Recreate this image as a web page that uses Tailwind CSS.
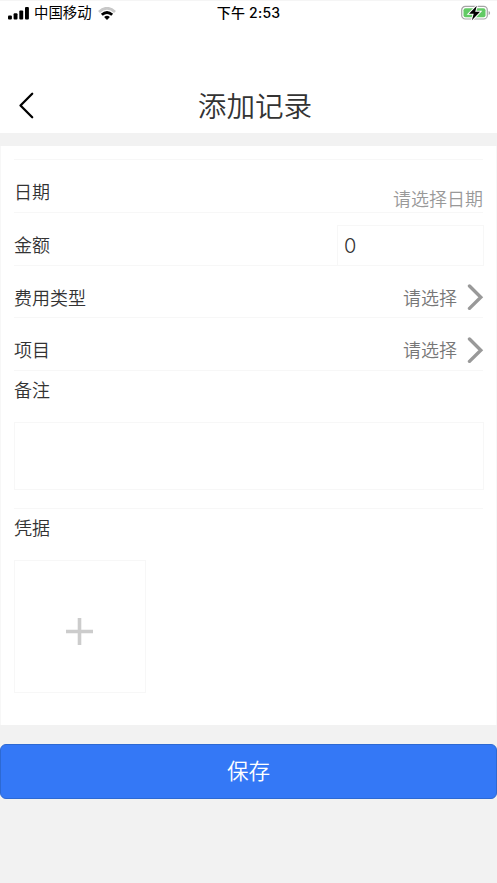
<!DOCTYPE html>
<html lang="zh-CN">
<head>
<meta charset="utf-8">
<meta name="viewport" content="width=device-width, initial-scale=1">
<title>添加记录</title>
<script src="https://cdn.jsdelivr.net/npm/@tailwindcss/browser@4"></script>
</head>
<body class="bg-[#f2f2f2] font-['Inter','Noto_Sans_CJK_SC',sans-serif] font-[350] text-[#333] h-[883px] overflow-hidden">
<header class="bg-white h-[133px] border-t border-[#f5f5f5]">
  <div class="grid grid-cols-3 items-center h-6 pl-2 pr-[6px] text-black font-normal">
    <div class="flex items-center">
      <svg class="w-[21px] h-[13px]" viewBox="0 0 21 13"><rect y="8.5" width="3.9" height="4" rx="1"/><rect x="5.6" y="6.3" width="3.9" height="6.2" rx="1"/><rect x="11.3" y="3.6" width="3.9" height="8.9" rx="1"/><rect x="17" y="0" width="3.9" height="12.5" rx="1"/></svg>
      <span class="ml-[5px] text-[14.4px] leading-6">中国移动</span>
      <svg class="ml-[6px] w-[18px] h-[13px]" viewBox="0 0 18 13" fill="none" stroke-width="2.8"><path d="M1 5Q9-2.4 17 5" stroke="#c8c8c8"/><path d="M3.8 7.8Q9 3.1 14.2 7.8" stroke="#000"/><path d="M6.1 10Q9 7.4 11.9 10L9 12.9Z" fill="#000"/></svg>
    </div>
    <div class="-ml-[2px] text-center text-[14px] font-medium leading-6 whitespace-nowrap tracking-[.2px]">下午 2:53</div>
    <svg class="justify-self-end w-[30px] h-[16px]" viewBox="0 0 30 16"><rect x=".7" y="1.4" width="25.6" height="12.6" rx="3.6" fill="#fff" stroke="#a5a5a5" stroke-width="1.2"/><rect x="2.5" y="3.2" width="22" height="9" rx="2" fill="#63ca65"/><path d="M27.6 6v4q1.5-.6 1.5-2T27.6 6" fill="#a5a5a5"/><path d="M15.8.8 8 8.8h4.7L10.9 15.2 19 6.8h-4.8Z" stroke="#fff" stroke-width="2" paint-order="stroke"/></svg>
  </div>
  <div class="mt-[54px] h-[56px] grid grid-cols-[60px_1fr_47px] items-center">
    <svg class="-mt-[4px] ml-[18px] w-4 h-[27px]" viewBox="0 0 16 27" fill="none" stroke="#000" stroke-width="2.3" stroke-linecap="round" stroke-linejoin="round"><path d="M14.2 1.7 2.5 13.5 14.2 25.3"/></svg>
    <h1 class="text-center text-[28.6px] leading-[56px]">添加记录</h1>
  </div>
</header>
<main class="mt-[13px] h-[579px] bg-white border-x border-[#f7f7f7] px-[13px] pt-[13px] text-[18px] leading-[26px]">
  <div class="h-[53px] border-t border-[#f7f7f7] flex justify-between">
    <span class="mt-[20px]">日期</span><span class="mt-[27px] text-[#999]">请选择日期</span>
  </div>
  <div class="h-[53px] border-t border-[#f7f7f7] flex justify-between">
    <span class="mt-[20px]">金额</span>
    <div class="-mr-px mt-[12px] w-[147px] h-[41px] border border-[#f7f7f7] pl-[6px] text-[20px] leading-[40px]">0</div>
  </div>
  <div class="h-[52px] border-t border-[#f7f7f7] flex justify-between">
    <span class="mt-[20px]">费用类型</span>
    <div class="-mr-px mt-[20px] flex h-[26px] items-center text-[#777]">请选择<svg class="-mt-[4px] ml-[10px] w-[17px] h-[26px]" viewBox="0 0 17 26" fill="none" stroke="#999" stroke-width="3.4" stroke-linecap="round"><path d="M2.5 2 13.8 13.2 2.5 24.4"/></svg></div>
  </div>
  <div class="h-[53px] border-t border-[#f7f7f7] flex justify-between">
    <span class="mt-[20px]">项目</span>
    <div class="-mr-px mt-[20px] flex h-[26px] items-center text-[#777]">请选择<svg class="-mt-[2px] ml-[10px] w-[17px] h-[26px]" viewBox="0 0 17 26" fill="none" stroke="#999" stroke-width="3.4" stroke-linecap="round"><path d="M2.5 2 13.8 13.2 2.5 24.4"/></svg></div>
  </div>
  <div class="h-[138px] border-t border-[#f7f7f7] pt-[7px]">
    <div>备注</div>
    <div class="-mr-px mt-[18px] h-[68px] border border-[#f7f7f7]"></div>
  </div>
  <div class="border-t border-[#f7f7f7] pt-[7px]">
    <div>凭据</div>
    <div class="mt-[18px] w-[132px] h-[133px] border border-[#f7f7f7] flex items-center justify-center">
      <svg class="mt-[10px] mr-px size-[27px]" viewBox="0 0 27 27" fill="none" stroke="#ccc" stroke-width="3.6"><path d="M13.5 0v27M0 13.5h27"/></svg>
    </div>
  </div>
</main>
<button class="mt-[19px] block w-full h-[55px] rounded-[6px] border border-[#2d69d2] bg-[#3478f6] text-white text-[21.6px] leading-[53px]">保存</button>
</body>
</html>
